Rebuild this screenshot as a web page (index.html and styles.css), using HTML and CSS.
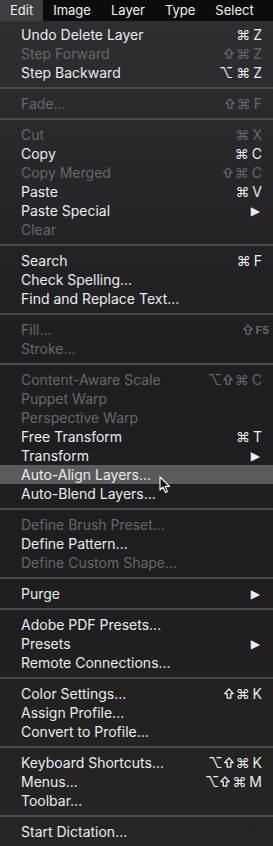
FILE: index.html
```html
<!DOCTYPE html>
<html lang="en">
<head>
  <meta charset="UTF-8">
  <meta name="viewport" content="width=device-width, initial-scale=1.0">
  <title>Edit menu</title>
  <link rel="stylesheet" href="styles.css">
</head>
<body>
  <!-- menu bar -->
  <header class="menubar">
    <span class="menubar-item open">Edit</span>
    <span class="menubar-item">Image</span>
    <span class="menubar-item">Layer</span>
    <span class="menubar-item">Type</span>
    <span class="menubar-item">Select</span>
  </header>

  <!-- dropdown -->
  <ul class="menu">
    <li class="item"><span>Undo Delete Layer</span><span class="key">⌘ Z</span></li>
    <li class="item off"><span>Step Forward</span><span class="key"><svg class="shift" viewBox="0 0 10 11"><path d="M5 1 L9.3 5.6 L6.8 5.6 L6.8 10.2 L3.2 10.2 L3.2 5.6 L0.7 5.6 Z"/></svg>⌘ Z</span></li>
    <li class="item"><span>Step Backward</span><span class="key">⌥ ⌘ Z</span></li>
    <li class="sep"></li>
    <li class="item off"><span>Fade...</span><span class="key"><svg class="shift" viewBox="0 0 10 11"><path d="M5 1 L9.3 5.6 L6.8 5.6 L6.8 10.2 L3.2 10.2 L3.2 5.6 L0.7 5.6 Z"/></svg>⌘ F</span></li>
    <li class="sep"></li>
    <li class="item off"><span>Cut</span><span class="key">⌘ X</span></li>
    <li class="item"><span>Copy</span><span class="key">⌘ C</span></li>
    <li class="item off"><span>Copy Merged</span><span class="key"><svg class="shift" viewBox="0 0 10 11"><path d="M5 1 L9.3 5.6 L6.8 5.6 L6.8 10.2 L3.2 10.2 L3.2 5.6 L0.7 5.6 Z"/></svg>⌘ C</span></li>
    <li class="item"><span>Paste</span><span class="key">⌘ V</span></li>
    <li class="item"><span>Paste Special</span><span class="arrow">▶</span></li>
    <li class="item off"><span>Clear</span></li>
    <li class="sep"></li>
    <li class="item"><span>Search</span><span class="key">⌘ F</span></li>
    <li class="item"><span>Check Spelling...</span></li>
    <li class="item"><span>Find and Replace Text...</span></li>
    <li class="sep"></li>
    <li class="item off"><span>Fill...</span><span class="key fkey"><svg class="shift" viewBox="0 0 10 11"><path d="M5 1 L9.3 5.6 L6.8 5.6 L6.8 10.2 L3.2 10.2 L3.2 5.6 L0.7 5.6 Z"/></svg>F5</span></li>
    <li class="item off"><span>Stroke...</span></li>
    <li class="sep"></li>
    <li class="item off"><span>Content-Aware Scale</span><span class="key">⌥<svg class="shift" viewBox="0 0 10 11"><path d="M5 1 L9.3 5.6 L6.8 5.6 L6.8 10.2 L3.2 10.2 L3.2 5.6 L0.7 5.6 Z"/></svg>⌘ C</span></li>
    <li class="item off"><span>Puppet Warp</span></li>
    <li class="item off"><span>Perspective Warp</span></li>
    <li class="item"><span>Free Transform</span><span class="key">⌘ T</span></li>
    <li class="item"><span>Transform</span><span class="arrow">▶</span></li>
    <li class="item hover"><span>Auto-Align Layers...</span>
      <svg class="cursor" width="12" height="18" viewBox="0 0 12 18">
        <path d="M1 1 L1 14 L4 11 L6.5 16.5 L8.5 15.6 L6.2 10.4 L10.5 10.4 Z" fill="#111" stroke="#fff" stroke-width="1.1" stroke-linejoin="round"/>
      </svg>
    </li>
    <li class="item"><span>Auto-Blend Layers...</span></li>
    <li class="sep"></li>
    <li class="item off"><span>Define Brush Preset...</span></li>
    <li class="item"><span>Define Pattern...</span></li>
    <li class="item off"><span>Define Custom Shape...</span></li>
    <li class="sep"></li>
    <li class="item"><span>Purge</span><span class="arrow">▶</span></li>
    <li class="sep"></li>
    <li class="item"><span>Adobe PDF Presets...</span></li>
    <li class="item"><span>Presets</span><span class="arrow">▶</span></li>
    <li class="item"><span>Remote Connections...</span></li>
    <li class="sep"></li>
    <li class="item"><span>Color Settings...</span><span class="key"><svg class="shift" viewBox="0 0 10 11"><path d="M5 1 L9.3 5.6 L6.8 5.6 L6.8 10.2 L3.2 10.2 L3.2 5.6 L0.7 5.6 Z"/></svg>⌘ K</span></li>
    <li class="item"><span>Assign Profile...</span></li>
    <li class="item"><span>Convert to Profile...</span></li>
    <li class="sep"></li>
    <li class="item"><span>Keyboard Shortcuts...</span><span class="key">⌥<svg class="shift" viewBox="0 0 10 11"><path d="M5 1 L9.3 5.6 L6.8 5.6 L6.8 10.2 L3.2 10.2 L3.2 5.6 L0.7 5.6 Z"/></svg>⌘ K</span></li>
    <li class="item"><span>Menus...</span><span class="key">⌥<svg class="shift" viewBox="0 0 10 11"><path d="M5 1 L9.3 5.6 L6.8 5.6 L6.8 10.2 L3.2 10.2 L3.2 5.6 L0.7 5.6 Z"/></svg>⌘ M</span></li>
    <li class="item"><span>Toolbar...</span></li>
    <li class="sep"></li>
    <li class="item"><span>Start Dictation...</span></li>
  </ul>
</body>
</html>
```

FILE: styles.css
```css
/* base */
html, body {
  margin: 0;
  height: 100%;
}

body {
  font-family: Inter, "Liberation Sans", sans-serif;
  background: linear-gradient(#2f2f34 0, #1f1f23 40%, #1e1e20 70%, #262626 100%);
  color: #ececec;
  overflow: hidden;
}

/* menu bar */
.menubar {
  display: flex;
  height: 21px;
  background-color: #0c0c0c;
  font-size: 13px;
  line-height: 21px;
}

.menubar-item {
  padding: 0 10px;
  color: #f0f0f0;
}

.menubar-item.open {
  background-color: #3e3e40;
}

/* dropdown */
.menu {
  list-style: none;
  margin: 0;
  padding: 4px 0 0;
  font-size: 14px;
}

.item {
  position: relative;
  display: flex;
  justify-content: space-between;
  align-items: center;
  height: 19px;
  padding: 0 11px 0 21px;
}

.item.off {
  color: #67676b;
}

.item.hover {
  background-color: #5b5b5d;
}

.key {
  display: flex;
  align-items: center;
  font-size: 14px;
  white-space: pre;
  word-spacing: -1px;
}

.key .shift {
  width: 10px;
  height: 11px;
  margin: 0 2px 0 1px;
  fill: none;
  stroke: currentColor;
  stroke-width: 1.3;
  stroke-linejoin: round;
}

.key.fkey {
  font-size: 11px;
  font-weight: bold;
  margin-right: -7px;
}

.key.fkey .shift {
  margin-right: 3px;
}

.arrow {
  font-family: "DejaVu Sans", sans-serif;
  font-size: 12px;
  margin-right: 2px;
}

.sep {
  height: 2px;
  margin: 5px 0;
  background-color: #4a4a4e;
}

.cursor {
  position: absolute;
  left: 159px;
  top: 11px;
}
```
